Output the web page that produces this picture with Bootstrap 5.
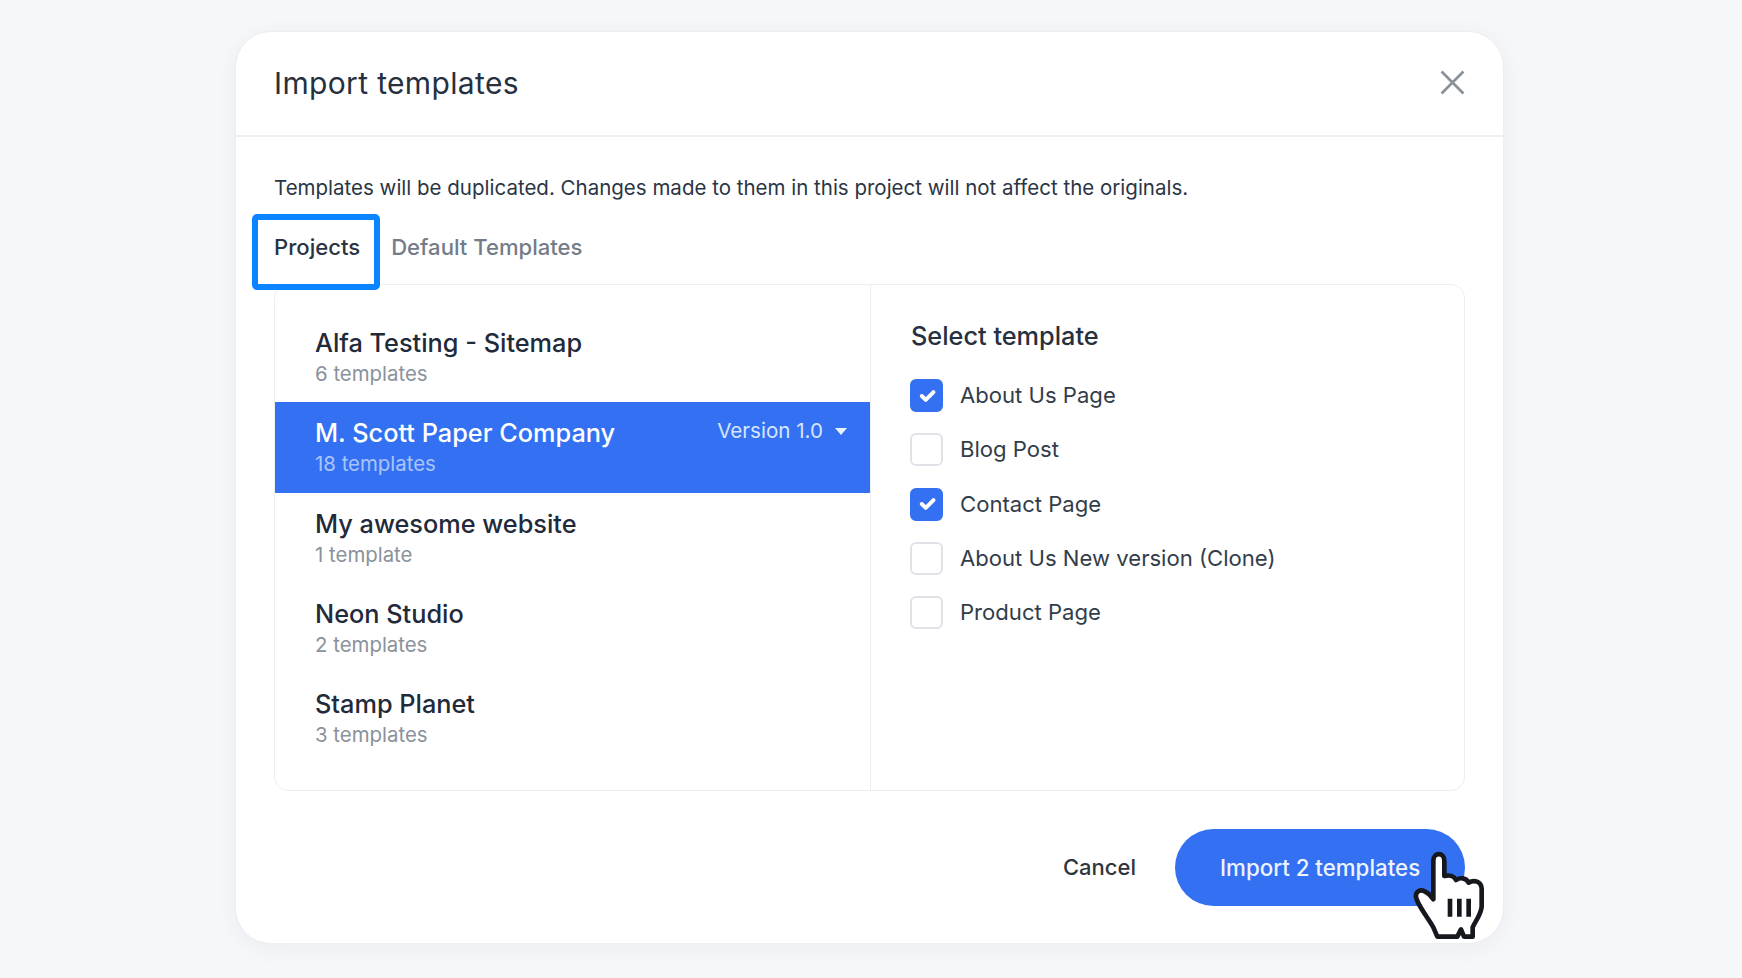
<!doctype html>
<html lang="en">
<head>
<meta charset="utf-8">
<title>Import templates</title>
<link href="https://cdn.jsdelivr.net/npm/bootstrap@5.3.0/dist/css/bootstrap.min.css" rel="stylesheet">
<style>
html,body{height:100%}
body{background:#f6f7f9;font-family:"Inter","Liberation Sans",sans-serif;color:#1e2a3a;overflow:hidden}
.stage{height:978px;padding-top:31px}
.dialog-box{width:1269px;height:913px;margin-left:235px;border:1px solid #eceef1;border-radius:36px;background:#fff;box-shadow:0 4px 24px rgba(30,40,60,.05)}
.dialog-head{height:105px;padding:0 38px 2px 38px;border-bottom:2px solid #eceef1}
.dialog-title{font-size:30px;font-weight:400;letter-spacing:.35px;margin:0;color:#26303f}
.closer{width:25px;height:25px;color:#8a9198}
.dialog-body{padding:0 38px}
.intro{font-size:20.5px;margin:36px 0 0;line-height:30px;color:#2b3544}
.tabrow{height:69px;margin-top:12px}
.tabitem{font-size:22.1px;font-weight:500;color:#737c88;line-height:30px;margin-right:31px;padding:17px 0 0;border:0;background:none}
.tabitem.on{color:#2a3442;position:relative}
.tabitem:focus{outline:0}
.focusmark{position:absolute;left:-22px;top:-1px;width:128px;height:76px;border:6px solid #0a84ff;border-radius:5px;pointer-events:none}
.panel{height:507px;border:1px solid #eceef1;border-radius:14px}
.leftcol{width:596px;border-right:1px solid #eceef1;padding-top:27px}
.proj{height:90.3px;padding:14px 40px 0;border:0;border-radius:0;background:none}
.proj.chosen{background:#3371f2;color:#fff}
.proj-name{font-size:25.3px;font-weight:500;line-height:34px;color:#1f2a3a}
.proj-count{font-size:20.4px;line-height:28px;color:#8a929c}
.chosen .proj-name{color:#fff}
.chosen .proj-count{color:#a9c4fa}
.vers{font-size:20.6px;color:#d8e5fe;line-height:28px;margin-top:1px;margin-right:-17px}
.caret-mark{width:0;height:0;border-left:6.5px solid transparent;border-right:6.5px solid transparent;border-top:7px solid #eaf1ff}
.rightcol{padding:35px 40px}
.sel-title{font-size:25.3px;font-weight:500;line-height:32px;margin:0 0 16.5px;color:#263140}
.tpl{height:54.3px;margin:0;padding:0;min-height:0}
.tpl .form-check-input{width:33px;height:33px;margin:0 17px 0 -1px;float:none;border:2px solid #dfe2e6;border-radius:6px;box-shadow:none;flex:none}
.tpl .form-check-input:checked{background-color:#3371f2;border-color:#3371f2;background-size:88%}
.tpl .form-check-label{font-size:22.1px;color:#333d4a;opacity:1}
.foot{margin-top:38px}
.ghost{font-size:22px;font-weight:500;color:#30353c;padding:0;border:0;margin-right:39px;background:none}
.primary-pill{width:290px;height:77px;border-radius:38.500px;background:#3371f2;border:0;color:#eef3ff;font-size:22.3px;font-weight:500;padding:0 0 0 45px;text-align:left}
.hand-wrap{position:relative}
.hand{position:absolute;left:225px;top:11px;width:100px;height:110px;pointer-events:none}
</style>
</head>
<body>
<div class="stage">
  <div class="dialog-box">
    <div class="dialog-head d-flex align-items-center justify-content-between">
      <h5 class="dialog-title">Import templates</h5>
      <svg class="closer" viewBox="0 0 24 24" fill="none" stroke="currentColor" stroke-width="2.6" aria-label="Close"><path d="M1.500 1.500 22.500 22.500M22.500 1.500 1.500 22.500"/></svg>
    </div>
    <div class="dialog-body">
      <p class="intro">Templates will be duplicated. Changes made to them in this project will not affect the originals.</p>
      <div class="tabrow d-flex align-items-start">
        <button class="tabitem on" type="button">Projects<span class="focusmark"></span></button>
        <button class="tabitem" type="button">Default Templates</button>
      </div>
      <div class="panel d-flex">
        <div class="leftcol flex-shrink-0">
          <div class="list-group list-group-flush">
            <div class="list-group-item proj"><div class="proj-name">Alfa Testing - Sitemap</div><div class="proj-count">6 templates</div></div>
            <div class="list-group-item proj chosen d-flex justify-content-between">
              <div><div class="proj-name">M. Scott Paper Company</div><div class="proj-count">18 templates</div></div>
              <div class="vers d-flex align-items-center gap-2 align-self-start">Version 1.0 <span class="caret-mark ms-1"></span></div>
            </div>
            <div class="list-group-item proj"><div class="proj-name">My awesome website</div><div class="proj-count">1 template</div></div>
            <div class="list-group-item proj"><div class="proj-name">Neon Studio</div><div class="proj-count">2 templates</div></div>
            <div class="list-group-item proj"><div class="proj-name">Stamp Planet</div><div class="proj-count">3 templates</div></div>
          </div>
        </div>
        <div class="rightcol flex-grow-1">
          <h6 class="sel-title">Select template</h6>
          <div class="form-check tpl d-flex align-items-center"><input class="form-check-input" type="checkbox" id="t1" checked><label class="form-check-label" for="t1">About Us Page</label></div>
          <div class="form-check tpl d-flex align-items-center"><input class="form-check-input" type="checkbox" id="t2"><label class="form-check-label" for="t2">Blog Post</label></div>
          <div class="form-check tpl d-flex align-items-center"><input class="form-check-input" type="checkbox" id="t3" checked><label class="form-check-label" for="t3">Contact Page</label></div>
          <div class="form-check tpl d-flex align-items-center"><input class="form-check-input" type="checkbox" id="t4"><label class="form-check-label" for="t4">About Us New version (Clone)</label></div>
          <div class="form-check tpl d-flex align-items-center"><input class="form-check-input" type="checkbox" id="t5"><label class="form-check-label" for="t5">Product Page</label></div>
        </div>
      </div>
      <div class="foot d-flex justify-content-end align-items-center">
        <button class="btn ghost" type="button">Cancel</button>
        <div class="hand-wrap">
          <button class="btn primary-pill" type="button">Import 2 templates</button>
          <svg class="hand" viewBox="0 0 300 330" aria-hidden="true">
            <path d="M112 290 L100 262 C85 235 60 205 50 178 C42 158 58 146 74 154 C85 159 94 168 100 178 L100 62 C100 36 133 36 133 62 L133 108 C148 104 162 108 168 120 C180 112 198 112 206 128 C222 118 244 124 245 146 L245 200 C243 225 225 245 218 262 L218 290 L192 290 L183 268 L172 290 Z" fill="#fff" stroke="#15181c" stroke-width="14" stroke-linejoin="round"/>
            <path d="M143 176h14v54h-14zM171 176h14v54h-14zM199 176h14v54h-14z" fill="#15181c"/>
          </svg>
        </div>
      </div>
    </div>
  </div>
</div>
<script src="https://cdn.jsdelivr.net/npm/bootstrap@5.3.0/dist/js/bootstrap.bundle.min.js"></script>
</body>
</html>
